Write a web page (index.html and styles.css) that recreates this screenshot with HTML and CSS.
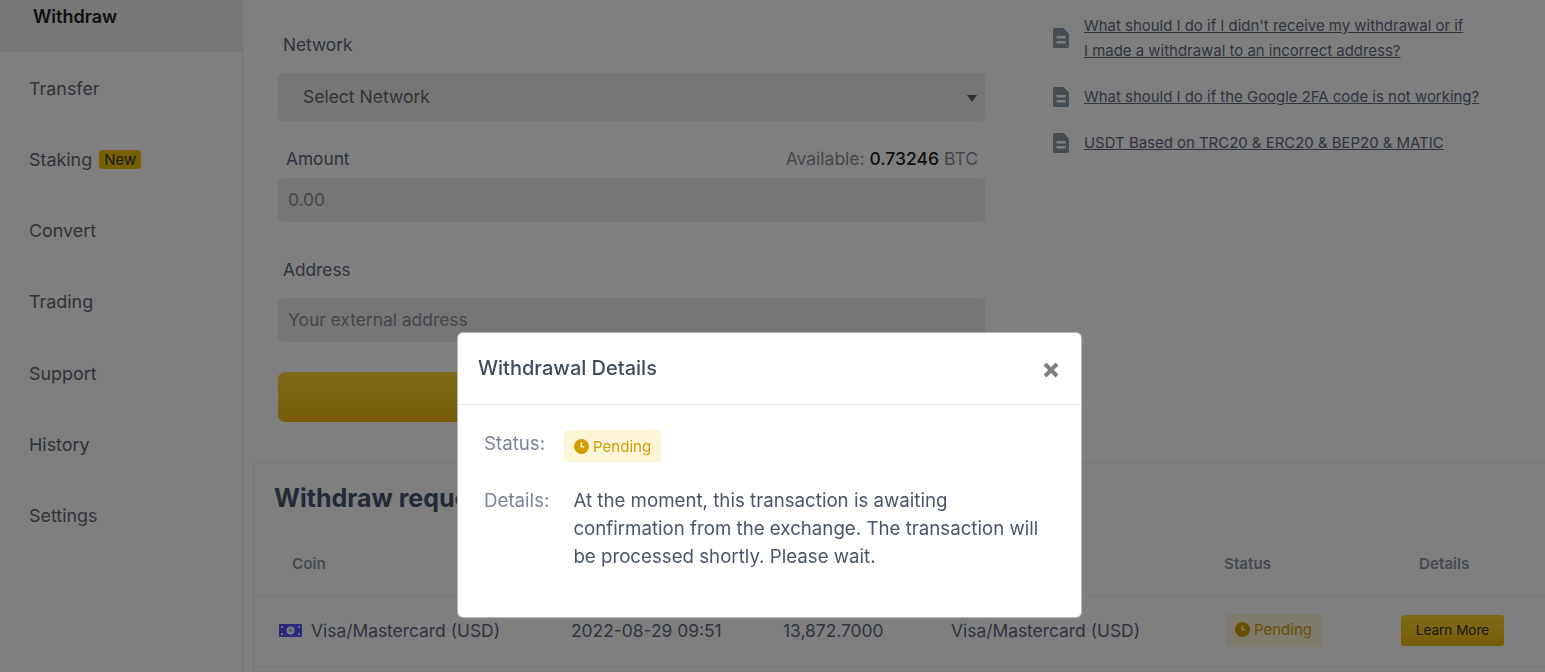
FILE: index.html
```html
<!DOCTYPE html>
<html lang="en">
<head>
<meta charset="utf-8">
<title>Withdraw</title>
<link rel="stylesheet" href="styles.css">
</head>
<body>
<svg class="defs" width="0" height="0" aria-hidden="true">
  <symbol id="doc" viewBox="0 0 16 20"><path fill-rule="evenodd" d="M1.5 0H10.5L16 5.500V18.500A1.500 1.500 0 0 1 14.500 20H1.500A1.500 1.500 0 0 1 0 18.500V1.500A1.500 1.500 0 0 1 1.500 0ZM3.500 8V10.500H12.500V8ZM3.500 13V15.500H12.500V13Z"/></symbol>
  <symbol id="clock" viewBox="0 0 16 16"><path fill-rule="evenodd" d="M8 0A8 8 0 1 1 8 16A8 8 0 1 1 8 0ZM7 3.500V9H11V7.500H8.600V3.500Z"/></symbol>
</svg>
<div class="app">
  <nav class="sidebar">
    <a class="nav-item nav-active">Withdraw</a>
    <a class="nav-item">Transfer</a>
    <a class="nav-item">Staking <span class="tag-new">New</span></a>
    <a class="nav-item">Convert</a>
    <a class="nav-item">Trading</a>
    <a class="nav-item">Support</a>
    <a class="nav-item">History</a>
    <a class="nav-item">Settings</a>
  </nav>
  <main class="main">
    <section class="top">
      <form class="form">
        <label class="field-label label-network">Network</label>
        <div class="select-wrap">
          <select class="select"><option>Select Network</option></select>
          <span class="select-arrow"></span>
        </div>
        <div class="amount-row">
          <label class="amount-label">Amount</label>
          <span class="available">Available: <b>0.73246</b> BTC</span>
        </div>
        <input class="input" placeholder="0.00">
        <label class="field-label label-address">Address</label>
        <input class="input" placeholder="Your external address">
        <button class="submit" type="button" aria-label="Withdraw"></button>
      </form>
      <ul class="faq">
        <li class="faq-item"><svg class="doc-icon"><use href="#doc"/></svg><a class="faq-link">What should I do if I didn't receive my withdrawal or if<br>I made a withdrawal to an incorrect address?</a></li>
        <li class="faq-item"><svg class="doc-icon"><use href="#doc"/></svg><a class="faq-link">What should I do if the Google 2FA code is not working?</a></li>
        <li class="faq-item"><svg class="doc-icon"><use href="#doc"/></svg><a class="faq-link">USDT Based on TRC20 &amp; ERC20 &amp; BEP20 &amp; MATIC</a></li>
      </ul>
    </section>
    <section class="card">
      <h2 class="card-title">Withdraw requests</h2>
      <div class="row head-row">
        <span class="th th-coin">Coin</span><span></span><span></span><span></span>
        <span class="th th-status">Status</span><span class="th th-details">Details</span>
      </div>
      <div class="row body-row">
        <span class="coin">
          <svg class="note" viewBox="0 0 23 13"><rect width="23" height="13" rx="1" fill="#5650ff"/><circle cx="11.500" cy="6.500" r="4" fill="#fff"/><circle cx="11.500" cy="6.500" r="2" fill="#b8b8e0"/><path d="M2 2h2v2H2zM19 2h2v2h-2zM2 9h2v2H2zM19 9h2v2h-2z" fill="#e0e0f4"/></svg>
          Visa/Mastercard (USD)
        </span>
        <span>2022-08-29 09:51</span>
        <span>13,872.7000</span>
        <span>Visa/Mastercard (USD)</span>
        <span><span class="pending pending-row"><svg class="clock"><use href="#clock"/></svg>Pending</span></span>
        <span><button class="learn" type="button">Learn More</button></span>
      </div>
    </section>
  </main>
</div>
<div class="backdrop"></div>
<div class="modal">
  <header class="modal-head">
    <h3 class="modal-title">Withdrawal Details</h3>
    <svg class="close" viewBox="0 0 16 16"><path d="M2 2L14 14M14 2L2 14"/></svg>
  </header>
  <div class="modal-body">
    <div class="status-line">
      <span class="modal-label">Status:</span>
      <span class="pending"><svg class="clock"><use href="#clock"/></svg>Pending</span>
    </div>
    <div class="details-line">
      <span class="modal-label">Details:</span>
      <p class="details-text">At the moment, this transaction is awaiting confirmation from the exchange. The transaction will be processed shortly. Please wait.</p>
    </div>
  </div>
</div>
</body>
</html>
```
FILE: styles.css
```css
* { box-sizing: border-box; }
html, body { margin: 0; height: 672px; overflow: hidden; }
body { font-family: Inter, "Liberation Sans", sans-serif; background: #fff; color: #4a5568; }
.defs { position: absolute; }

.app { display: flex; height: 672px; }

.sidebar { flex: 0 0 243px; border-right: 1px solid #eaeaea; }
.nav-item { display: flex; align-items: center; gap: 7px; height: 71.3px; padding-left: 29px; font-size: 17.900px; color: #626670; }
.nav-active { height: 52.400px; padding: 0 0 19px 33px; background: #eee; font-weight: 600; font-size: 18px; color: #222; }
.tag-new { background: #f0c000; color: #333; font-size: 15px; line-height: 19px; padding: 0 5px; border-radius: 4px; }

.main { flex: 1; min-width: 0; padding-left: 10px; }
.top { display: flex; height: 462px; padding-left: 25px; }
.form { width: 707px; padding-top: 33px; display: flex; flex-direction: column; flex: none; }
.field-label { font-size: 17.300px; line-height: 24px; padding-left: 5px; color: #5c6474; }
.label-address { margin-top: 36px; margin-bottom: 16px; }
.label-network { margin-bottom: 16px; }

.select-wrap { position: relative; height: 48px; background: #ededed; border-radius: 5px; }
.select { appearance: none; display: block; width: 100%; height: 46px; padding: 0 25px; border: 0; border-radius: 5px; background: #ededed; font: 400 17.500px Inter, sans-serif; color: #666; }
.select-arrow { position: absolute; right: 8px; top: 22px; border-left: 5px solid transparent; border-right: 5px solid transparent; border-top: 7px solid #555f70; }

.amount-row { display: flex; justify-content: space-between; margin-top: 26px; margin-bottom: 7px; padding: 0 7px 0 8px; line-height: 24px; font-size: 17.300px; }
.amount-label { color: #5c6474; }
.available { color: #8a8f98; font-size: 17.500px; }
.available b { font-weight: 500; color: #222; }

.input { display: block; width: 100%; height: 44px; border: 0; border-radius: 3px; padding: 0 10px 2px; background: #ededed; font: 400 17.400px Inter, sans-serif; flex: none; }
.input::placeholder { color: #868d99; opacity: 1; }
.submit { flex: none; height: 50px; margin-top: 30px; border: 0; border-radius: 7px; background: linear-gradient(#fcd535, #f0b90b); }

.faq { list-style: none; margin: 0 0 0 68px; padding: 13px 0 0; display: flex; flex-direction: column; gap: 21px; }
.faq-item { display: flex; align-items: center; gap: 15px; }
.doc-icon { width: 16px; height: 20px; flex: none; fill: #8c98a8; }
.faq-link { display: block; padding-top: 1px; margin-bottom: -1px; font-size: 14.950px; line-height: 25px; color: #5f6880; text-decoration: underline; white-space: nowrap; }

.card { border: 1px solid #eee; border-right: 0; border-bottom: 0; border-radius: 4px 0 0 0; height: 300px; width: 1400px; }
.card-title { margin: 0; padding: 20px 0 0 20px; height: 74px; font-size: 25px; line-height: 30px; font-weight: 700; color: #46546f; }
.row { display: grid; grid-template-columns: 292px 212px 168px 274px 176px 1fr; padding-left: 25px; align-items: center; }
.head-row { height: 59px; padding-bottom: 6px; border-bottom: 1px solid #eee; }
.body-row { height: 71px; padding-bottom: 2px; border-bottom: 1px solid #eee; font-size: 17.400px; color: #5f6880; }
.th { font-size: 15.200px; font-weight: 600; color: #8a91a4; }
.th-coin { padding-left: 13px; }
.th-status { margin-left: -1px; }
.th-details { padding-left: 18px; }
.coin { display: flex; align-items: center; gap: 9px; }
.note { width: 23px; height: 13px; flex: none; }

.pending { display: inline-flex; align-items: center; gap: 4px; height: 32px; padding: 0 10px; background: #fdf5d8; border-radius: 4px; font-size: 15px; color: #d19d00; }
.pending-row { height: 33px; width: 97px; padding-bottom: 2px; }
.clock { width: 15px; height: 15px; flex: none; fill: #d19d00; }
.learn { display: block; height: 31px; width: 103px; border: 0; border-radius: 3px; background: linear-gradient(#fcd535, #f0b90b); font: 400 13.500px Inter, sans-serif; color: #333; padding: 0; }

.backdrop { position: fixed; inset: 0; background: rgba(0,0,0,.5); }
.modal { position: fixed; left: 458px; top: 333px; width: 623px; height: 284px; background: #fff; border-radius: 5px; box-shadow: 0 0 0 1px #b8b8b8; }
.modal-head { display: flex; justify-content: space-between; align-items: center; height: 72px; padding: 0 22px 0 20px; border-bottom: 1px solid #e9ecef; }
.modal-title { margin: 0 0 2px; font-size: 20px; font-weight: 500; color: #3f4a5f; }
.close { width: 16px; height: 16px; margin-top: 3px; fill: none; stroke: #808080; stroke-width: 4; }
.modal-body { padding: 25px 30px 0 26px; }
.status-line { display: flex; align-items: flex-start; gap: 19px; }
.status-line .modal-label { line-height: 28px; }
.details-line { display: flex; gap: 24px; margin-top: 25px; }
.modal-label { font-size: 18.700px; line-height: 28px; color: #7c8597; flex: none; }
.details-text { margin: 0; font-size: 18.700px; line-height: 28px; color: #4a5568; }
```
